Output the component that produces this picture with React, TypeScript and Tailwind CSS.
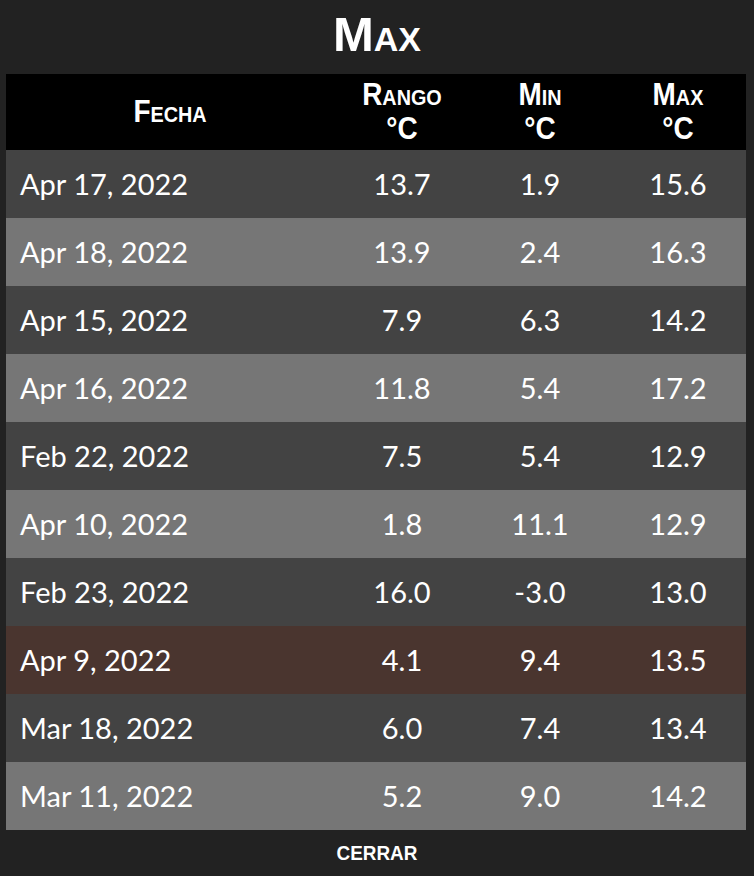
const rows = [
  { date: 'Apr 17, 2022', range: '13.7', min: '1.9', max: '15.6' },
  { date: 'Apr 18, 2022', range: '13.9', min: '2.4', max: '16.3' },
  { date: 'Apr 15, 2022', range: '7.9', min: '6.3', max: '14.2' },
  { date: 'Apr 16, 2022', range: '11.8', min: '5.4', max: '17.2' },
  { date: 'Feb 22, 2022', range: '7.5', min: '5.4', max: '12.9' },
  { date: 'Apr 10, 2022', range: '1.8', min: '11.1', max: '12.9' },
  { date: 'Feb 23, 2022', range: '16.0', min: '-3.0', max: '13.0' },
  { date: 'Apr 9, 2022', range: '4.1', min: '9.4', max: '13.5', current: true },
  { date: 'Mar 18, 2022', range: '6.0', min: '7.4', max: '13.4' },
  { date: 'Mar 11, 2022', range: '5.2', min: '9.0', max: '14.2' },
];

const cond = "font-['Liberation_Sans',sans-serif] font-bold";

export default function App() {
  return (
    <div className="w-[754px] h-[876px] bg-[#222222] text-white flex flex-col">
      <h1 className={`${cond} h-[74px] flex items-center justify-center text-[49px] [font-variant:small-caps] pb-1`}>
        Max
      </h1>

      <div className="mx-[6px] grid grid-cols-[328px_136px_140px_136px]">
        <div className={`${cond} bg-black h-[76px] col-span-4 grid grid-cols-subgrid items-center text-center text-[31px] leading-[34px] [font-variant:small-caps]`}>
          <div className="scale-x-90">Fecha</div>
          <div className="scale-x-90 flex flex-col">
            <span>Rango</span>
            <span>°C</span>
          </div>
          <div className="scale-x-90 flex flex-col">
            <span>Min</span>
            <span>°C</span>
          </div>
          <div className="scale-x-90 flex flex-col">
            <span>Max</span>
            <span>°C</span>
          </div>
        </div>

        {rows.map((r, i) => (
          <div
            key={r.date}
            className={`col-span-4 grid grid-cols-subgrid items-center h-[68px] text-[29px] font-['Lato',sans-serif] ${
              r.current ? 'bg-[#4a352f]' : i % 2 === 0 ? 'bg-[#434343]' : 'bg-[#767676]'
            }`}
          >
            <div className="pl-[14px]">{r.date}</div>
            <div className="text-center">{r.range}</div>
            <div className="text-center">{r.min}</div>
            <div className="text-center">{r.max}</div>
          </div>
        ))}
      </div>

      <div className="flex-1 flex items-center justify-center">
        <button type="button" className={`${cond} text-[21px] uppercase scale-x-90`}>
          Cerrar
        </button>
      </div>
    </div>
  );
}
